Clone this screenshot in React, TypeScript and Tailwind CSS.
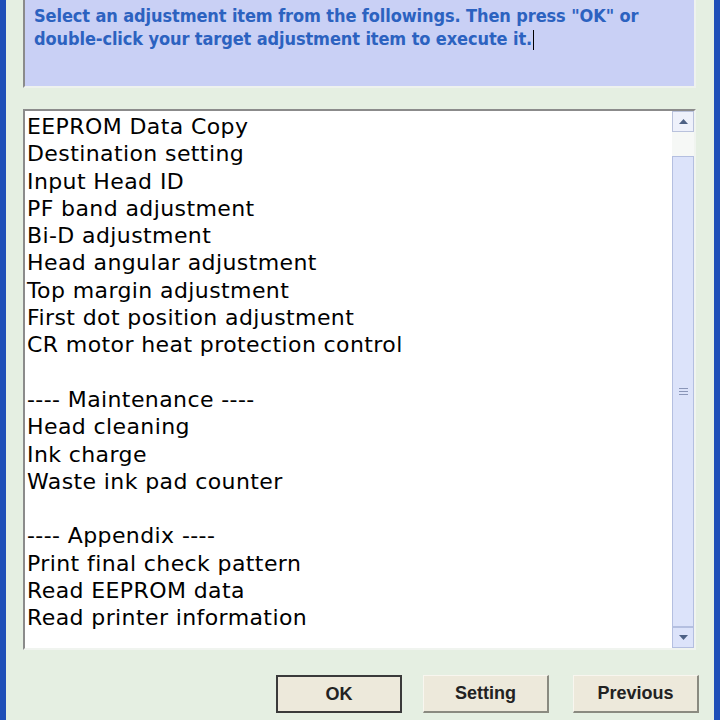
import React from "react"

const items = [
  "EEPROM Data Copy",
  "Destination setting",
  "Input Head ID",
  "PF band adjustment",
  "Bi-D adjustment",
  "Head angular adjustment",
  "Top margin adjustment",
  "First dot position adjustment",
  "CR motor heat protection control",
  "",
  "---- Maintenance ----",
  "Head cleaning",
  "Ink charge",
  "Waste ink pad counter",
  "",
  "---- Appendix ----",
  "Print final check pattern",
  "Read EEPROM data",
  "Read printer information",
]

function DialogButton({ label, primary }: { label: string; primary?: boolean }) {
  return (
    <button
      className={
        primary
          ? "w-[126px] h-[38px] bg-[#ede9db] border-2 border-[#3a3a3a] text-[18px] font-bold text-[#222]"
          : "w-[126px] h-[38px] bg-[#ede9db] border border-t-[#f8f6ef] border-l-[#f8f6ef] border-r-[#8a8a80] border-b-[#8a8a80] border-r-2 border-b-2 text-[18px] font-bold text-[#222]"
      }
    >
      {label}
    </button>
  )
}

export default function App() {
  return (
    <div
      className="w-[720px] h-[720px] overflow-hidden flex bg-[#e5efe2]"
      style={{ fontFamily: '"Liberation Sans", Arial, sans-serif' }}
    >
      <div className="w-[6px] bg-[#1f4fb8]" />
      <div className="flex-1 flex flex-col pl-[17px] pr-[18px]">
        {/* instructions */}
        <div className="h-[90px] -mt-[2px] bg-[#c9d0f5] border-2 border-t-[#8b8b8b] border-l-[#8b8b8b] border-r-[#eef2ee] border-b-[#eef2ee] px-[9px] pt-[4px]">
          <p
            className="text-[18px] font-bold leading-[23px] text-[#2c62c0] tracking-[-0.1px]"
            style={{ fontFamily: '"Liberation Sans Narrow", "DejaVu Sans Condensed", "Liberation Sans", sans-serif' }}
          >
            Select an adjustment item from the followings. Then press "OK" or
            <br />
            double-click your target adjustment item to execute it.
            <span className="inline-block w-[1px] h-[20px] bg-black align-middle ml-[1px]" />
          </p>
        </div>

        {/* list */}
        <div className="mt-[21px] h-[541px] flex bg-white border-2 border-t-[#8b8b8b] border-l-[#8b8b8b] border-r-[#f0f4ef] border-b-[#f0f4ef]">
          <ul
            className="flex-1 pl-[2px] pt-[2px] text-[22px] leading-[27.3px] text-black tracking-[0.4px]"
            style={{ fontFamily: '"DejaVu Sans", Verdana, sans-serif' }}
          >
            {items.map((it, i) => (
              <li key={i} className="h-[27.3px] whitespace-nowrap">
                {it}
              </li>
            ))}
          </ul>
          <div className="w-[22px] flex flex-col bg-[#f6f8f6]">
            <div className="h-[21px] flex items-center justify-center bg-[#eef1fb] border border-[#b9c2dc]">
              <svg width="9" height="5" viewBox="0 0 9 5">
                <path d="M0 5 L4.5 0 L9 5 Z" fill="#4d6185" />
              </svg>
            </div>
            <div className="h-[24px]" />
            <div className="flex-1 flex items-center justify-center bg-[#dce3fa] border border-[#b4bfe0]">
              <div className="flex flex-col gap-[2px]">
                <div className="w-[9px] h-[1px] bg-[#8a96b8]" />
                <div className="w-[9px] h-[1px] bg-[#8a96b8]" />
                <div className="w-[9px] h-[1px] bg-[#8a96b8]" />
              </div>
            </div>
            <div className="h-[21px] flex items-center justify-center bg-[#dce3fa] border border-[#b4bfe0]">
              <svg width="9" height="5" viewBox="0 0 9 5">
                <path d="M0 0 L4.5 5 L9 0 Z" fill="#4d6185" />
              </svg>
            </div>
          </div>
        </div>

        {/* buttons */}
        <div className="mt-[25px] -mr-[3px] flex justify-end">
          <DialogButton label="OK" primary />
          <div className="w-[21px]" />
          <DialogButton label="Setting" />
          <div className="w-[24px]" />
          <DialogButton label="Previous" />
        </div>
      </div>
      <div className="w-[6px] bg-[#1f4fb8]" />
    </div>
  )
}
